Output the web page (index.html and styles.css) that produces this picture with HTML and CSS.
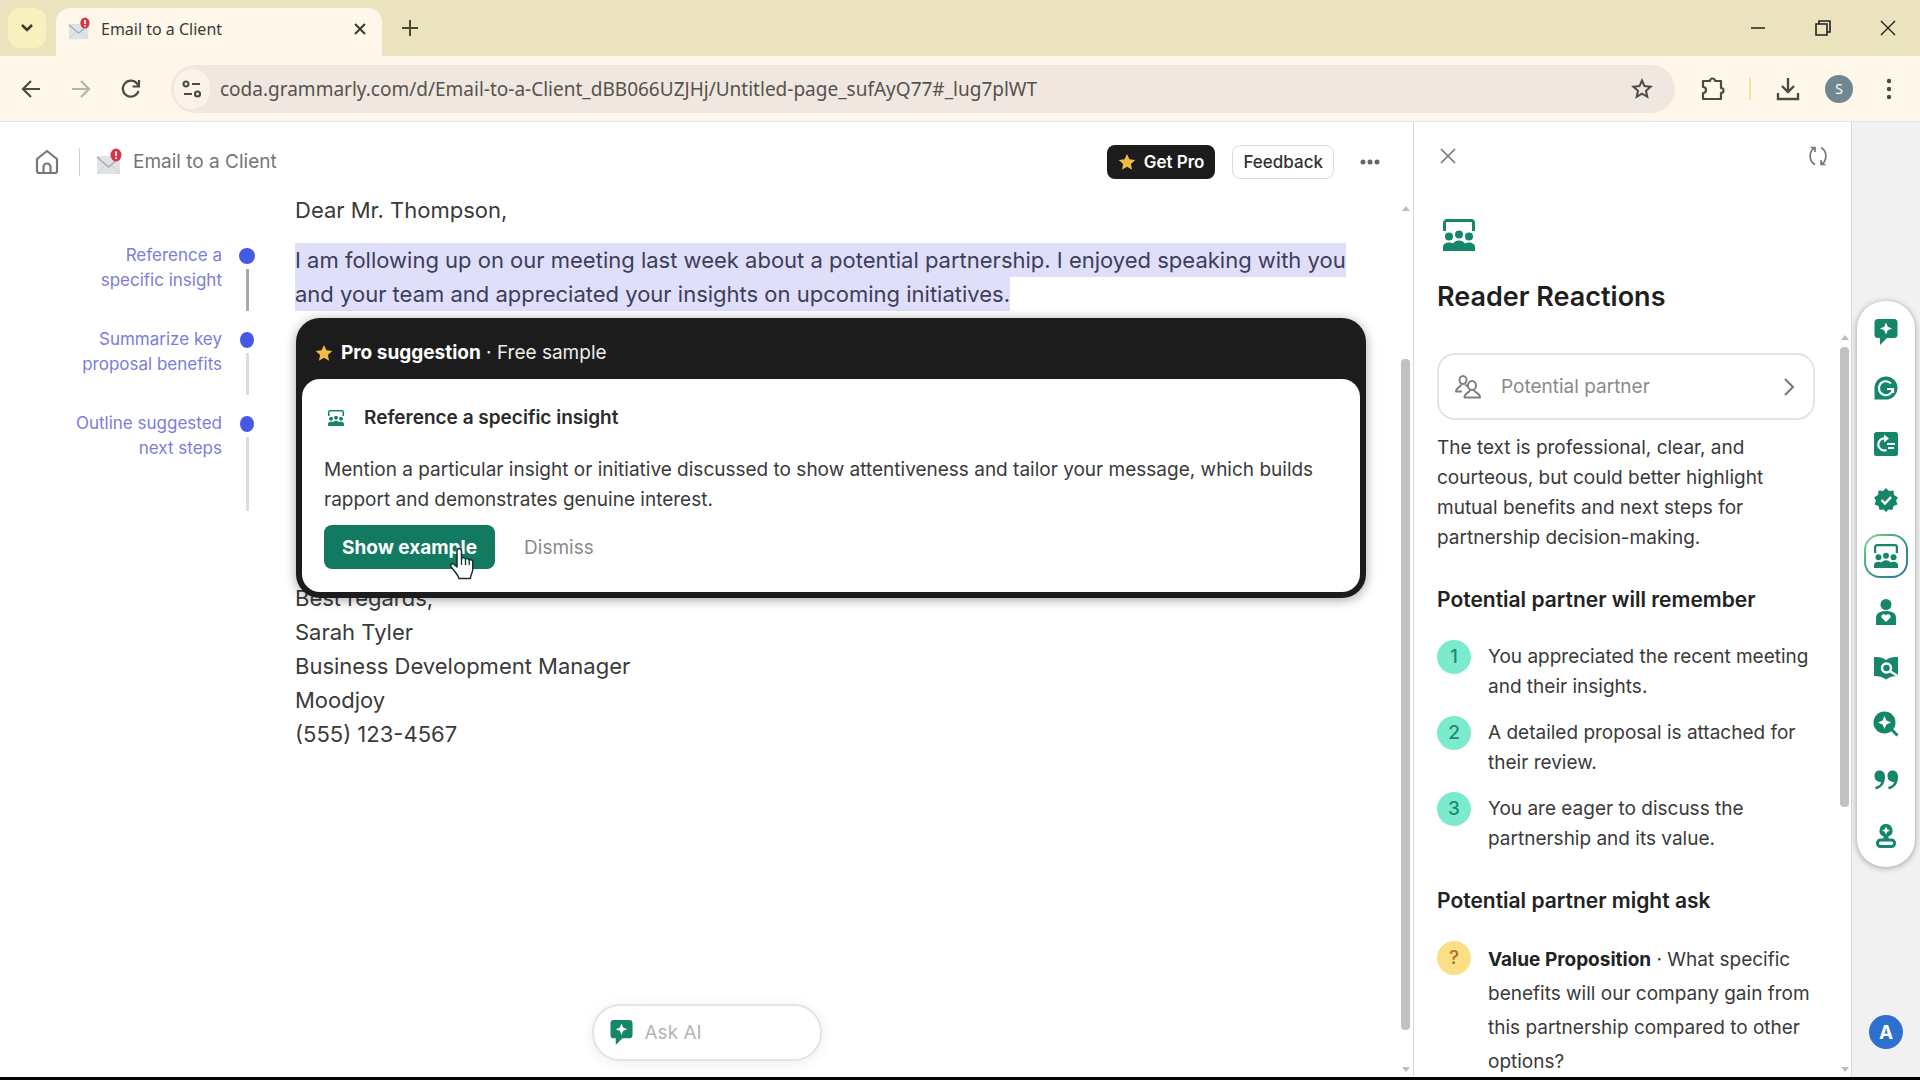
FILE: index.html
```html
<!DOCTYPE html>
<html lang="en">
<head>
    <meta charset="UTF-8">
    <meta name="viewport" content="width=device-width, initial-scale=1.0">
    <title>Email to a Client</title>
    <link rel="stylesheet" href="styles.css">
</head>
<body>
    <!-- Shared icons -->
    <svg class="sprite" aria-hidden="true">
        <symbol id="mail" viewBox="0 0 26 28">
            <rect x="1" y="8" width="23" height="18" rx="1" fill="#dfe3e5"/>
            <path d="M1 9l11.500 10L24 9" fill="none" stroke="#a3acb2" stroke-width="1.500"/>
            <path d="M1 26l8-9M24 26l-8-9" fill="none" stroke="#cdd3d6"/>
            <ellipse cx="20" cy="7" rx="5.500" ry="6.500" fill="#da3447"/>
            <path d="M20 3.500v4.500M20 9.500v1.500" stroke="#fff" stroke-width="2"/>
        </symbol>
        <symbol id="star" viewBox="0 0 20 20">
            <path d="M10 1l2.700 6 6.500.700-4.900 4.400 1.400 6.500L10 15.300l-5.700 3.300 1.400-6.500L.800 7.700 7.300 7z" fill="#f3bb46"/>
        </symbol>
        <symbol id="audience" viewBox="0 0 32 32">
            <path d="M1.500 12V4a2.500 2.500 0 0 1 2.500-2.500h24A2.500 2.500 0 0 1 30.500 4v8" fill="none" stroke="currentColor" stroke-width="3"/>
            <circle cx="6" cy="17.500" r="4" fill="currentColor"/>
            <circle cx="16" cy="15.500" r="4" fill="currentColor"/>
            <circle cx="26" cy="17.500" r="4" fill="currentColor"/>
            <path d="M0 32v-4c0-3 3-4.500 6-4.500 1.500 0 3 .300 4 1 1.500-2 3.500-3 6-3s4.500 1 6 3c1-.700 2.500-1 4-1 3 0 6 1.500 6 4.500v4z" fill="currentColor"/>
        </symbol>
        <symbol id="chat" viewBox="0 0 24 26">
            <path d="M4 0h16a3.500 3.500 0 0 1 3.500 3.500v12A3.500 3.500 0 0 1 20 19h-7l-7 7v-7H4A3.500 3.500 0 0 1 .500 15.500v-12A3.500 3.500 0 0 1 4 0z" fill="currentColor"/>
            <path d="M12 3.500l1.700 4.300L18 9.500l-4.300 1.700L12 15.500l-1.700-4.300L6 9.500l4.300-1.700z" fill="#fff"/>
        </symbol>
    </svg>

    <div class="browser">
        <header class="tab-strip">
            <button class="tab-search" aria-label="Search tabs">
                <svg width="14" height="10" viewBox="0 0 14 10"><path d="M2 2l5 5 5-5" fill="none" stroke="currentColor" stroke-width="2.500"/></svg>
            </button>
            <div class="tab">
                <svg class="tab-icon"><use href="#mail"/></svg>
                <span class="tab-title">Email to a Client</span>
                <button class="plain" aria-label="Close tab">
                    <svg width="12" height="12" viewBox="0 0 12 12"><path d="M1 1l10 10M11 1L1 11" fill="none" stroke="#3b3a35" stroke-width="2"/></svg>
                </button>
            </div>
            <button class="plain new-tab" aria-label="New tab">
                <svg width="16" height="16" viewBox="0 0 16 16"><path d="M8 0v16M0 8h16" stroke="#4a482f" stroke-width="2"/></svg>
            </button>
            <div class="window-buttons">
                <button class="plain" aria-label="Minimize"><svg width="16" height="16" viewBox="0 0 16 16"><path d="M1 8h14" stroke="#222" stroke-width="1.500"/></svg></button>
                <button class="plain" aria-label="Restore"><svg width="16" height="16" viewBox="0 0 16 16"><path d="M1 4h11v11H1zM4 4V1h11v11h-3" fill="none" stroke="#222" stroke-width="1.600"/></svg></button>
                <button class="plain" aria-label="Close window"><svg width="16" height="16" viewBox="0 0 16 16"><path d="M1 1l14 14M15 1L1 15" stroke="#222" stroke-width="1.400"/></svg></button>
            </div>
        </header>

        <nav class="toolbar">
            <button class="plain" aria-label="Back"><svg width="20" height="20" viewBox="0 0 20 20"><path d="M19 10H2M10 2l-8 8 8 8" fill="none" stroke="#4d4943" stroke-width="2.200"/></svg></button>
            <button class="plain" aria-label="Forward"><svg width="20" height="20" viewBox="0 0 20 20"><path d="M1 10h17M10 2l8 8-8 8" fill="none" stroke="#b9b3ab" stroke-width="2.200"/></svg></button>
            <button class="plain" aria-label="Reload"><svg width="20" height="20" viewBox="0 0 20 20"><path d="M17.500 12A8 8 0 1 1 16 4.500l1.500 2M18 1v6.500h-6.500" fill="none" stroke="#4d4943" stroke-width="2.200"/></svg></button>
            <div class="omnibox">
                <button class="site-info" aria-label="View site information">
                    <svg width="20" height="18" viewBox="0 0 20 18" fill="none" stroke="#4d4943" stroke-width="2.200"><circle cx="4" cy="4" r="2.500"/><path d="M10 4h8M2 14h8"/><circle cx="15.500" cy="14" r="2.500"/></svg>
                </button>
                <input class="url" type="text" aria-label="Address" value="coda.grammarly.com/d/Email-to-a-Client_dBB066UZJHj/Untitled-page_sufAyQ77#_lug7plWT">
                <button class="plain" aria-label="Bookmark"><svg width="22" height="22" viewBox="0 0 22 22"><path d="M11 2.500l2.500 5.600 6.100.600-4.600 4.100 1.300 6L11 15.700l-5.300 3.100 1.300-6-4.600-4.100 6.100-.600z" fill="none" stroke="#4d4943" stroke-width="2"/></svg></button>
            </div>
            <button class="plain" aria-label="Extensions"><svg width="26" height="26" viewBox="0 0 26 26"><path d="M3 5h7a2.500 2.500 0 0 1 5 0h6v7a2.500 2.500 0 0 1 0 5v6H3v-6a3 3 0 0 0 0-6z" fill="none" stroke="#4d4943" stroke-width="2.200" stroke-linejoin="round"/></svg></button>
            <span class="toolbar-divider"></span>
            <button class="plain" aria-label="Downloads"><svg width="24" height="24" viewBox="0 0 24 24"><path d="M12 1v13M6 9l6 6 6-6M2 16v6h20v-6" fill="none" stroke="#4d4943" stroke-width="2.400"/></svg></button>
            <button class="profile" aria-label="Profile">S</button>
            <button class="plain" aria-label="Menu"><svg width="6" height="22" viewBox="0 0 6 22" fill="#4d4943"><circle cx="3" cy="3" r="2.200"/><circle cx="3" cy="11" r="2.200"/><circle cx="3" cy="19" r="2.200"/></svg></button>
        </nav>

        <div class="workspace">
            <main class="editor">
                <header class="doc-header">
                    <button class="plain" aria-label="Home"><svg width="24" height="26" viewBox="0 0 24 26" fill="none" stroke="#777" stroke-width="2.200" stroke-linejoin="round"><path d="M2 10l10-8 10 8v12a2 2 0 0 1-2 2H4a2 2 0 0 1-2-2z"/><path d="M8.500 24v-6a3.500 3.500 0 0 1 7 0v6"/></svg></button>
                    <span class="doc-divider"></span>
                    <svg class="doc-icon"><use href="#mail"/></svg>
                    <span class="doc-title">Email to a Client</span>
                    <button class="get-pro"><svg width="18" height="18"><use href="#star"/></svg>Get Pro</button>
                    <button class="feedback">Feedback</button>
                    <button class="plain more" aria-label="More options"><svg width="20" height="6" viewBox="0 0 20 6" fill="#666"><circle cx="3" cy="3" r="2.500"/><circle cx="10" cy="3" r="2.500"/><circle cx="17" cy="3" r="2.500"/></svg></button>
                </header>

                <div class="doc-body">
                    <ul class="outline">
                        <li class="active"><a href="#">Reference a<br>specific insight</a><span class="marker"></span></li>
                        <li><a href="#">Summarize key<br>proposal benefits</a><span class="marker"></span></li>
                        <li class="long"><a href="#">Outline suggested<br>next steps</a><span class="marker"></span></li>
                    </ul>

                    <article class="letter">
                        <p>Dear Mr. Thompson,</p>
                        <p><mark>I am following up on our meeting last week about a potential partnership. I enjoyed speaking with you and your team and appreciated your insights on upcoming initiatives.</mark></p>

                        <section class="suggestion">
                            <div class="suggestion-header">
                                <svg width="18" height="18"><use href="#star"/></svg>
                                <span><strong>Pro suggestion</strong> · Free sample</span>
                            </div>
                            <div class="suggestion-card">
                                <h2><svg width="16" height="16"><use href="#audience"/></svg>Reference a specific insight</h2>
                                <p>Mention a particular insight or initiative discussed to show attentiveness and tailor your message, which builds rapport and demonstrates genuine interest.</p>
                                <div class="suggestion-actions">
                                    <button class="show-example">Show example
                                        <svg class="pointer" width="26" height="34" viewBox="0 0 26 34"><path d="M8 20V4c0-3.500 4.500-3.500 4.500 0v8c.500-2 4-1.800 4 .500.600-1.600 3.700-1.300 3.700 1 .700-1.400 3.600-1 3.600 1.500v7c0 4-2 5-2.500 9.500H10C9 27 3.500 22.500 2 19.500c-1-2.500 1.500-3.500 3.200-2z" fill="#fff" stroke="#16302a" stroke-width="1.500" stroke-linejoin="round"/><path d="M12.500 12v6M16.500 13v5M20.200 14v4" stroke="#16302a" stroke-width="1.300"/></svg>
                                    </button>
                                    <button class="dismiss">Dismiss</button>
                                </div>
                            </div>
                        </section>

                        <p class="signature">Best regards,<br>Sarah Tyler<br>Business Development Manager<br>Moodjoy<br>(555) 123-4567</p>
                    </article>

                    <div class="scrollbar doc-scroll"><span class="arrow up"></span><span class="thumb"></span><span class="arrow down"></span></div>
                </div>

                <label class="ask-ai">
                    <svg width="23" height="25"><use href="#chat"/></svg>
                    <input type="text" placeholder="Ask AI" aria-label="Ask AI">
                </label>
            </main>

            <aside class="panel">
                <div class="panel-tools">
                    <button class="plain" aria-label="Close panel"><svg width="16" height="16" viewBox="0 0 16 16"><path d="M1 1l14 14M15 1L1 15" stroke="#777" stroke-width="1.700"/></svg></button>
                    <button class="plain" aria-label="Refresh"><svg width="20" height="20" viewBox="0 0 20 20" fill="none" stroke="#777" stroke-width="1.700"><path d="M7 18.500C.500 15 .500 5 7 1.500M2.500 1.500H7V6M13 1.500c6.500 3.500 6.500 13.500 0 17M17.500 18.500H13V14"/></svg></button>
                </div>
                <div class="panel-title">
                    <svg width="32" height="32"><use href="#audience"/></svg>
                    <h1>Reader Reactions</h1>
                </div>
                <div class="panel-body">
                    <div class="panel-content">
                        <button class="reader">
                            <svg width="26" height="24" viewBox="0 0 26 24" fill="none" stroke="#808080" stroke-width="2" stroke-linejoin="round"><ellipse cx="8" cy="5" rx="3.500" ry="4"/><ellipse cx="17" cy="10.500" rx="4" ry="4.500"/><path d="M6 9.500c-.500 3-5 3-5 7h6M10.500 9.500l1.500 2M15 15c-.500 3-5.500 2.500-5.500 7.500h15.500c0-5-5.500-4.500-6-7.500"/></svg>
                            <span>Potential partner</span>
                            <svg width="12" height="20" viewBox="0 0 12 20"><path d="M2 2l8 8-8 8" fill="none" stroke="#777" stroke-width="2"/></svg>
                        </button>
                        <p class="summary">The text is professional, clear, and courteous, but could better highlight mutual benefits and next steps for partnership decision-making.</p>
                        <h2>Potential partner will remember</h2>
                        <ol class="points">
                            <li><span class="badge">1</span><p>You appreciated the recent meeting and their insights.</p></li>
                            <li><span class="badge">2</span><p>A detailed proposal is attached for their review.</p></li>
                            <li><span class="badge">3</span><p>You are eager to discuss the partnership and its value.</p></li>
                        </ol>
                        <h2>Potential partner might ask</h2>
                        <ul class="points questions">
                            <li><span class="badge">?</span><p><strong>Value Proposition</strong> · What specific benefits will our company gain from this partnership compared to other options?</p></li>
                        </ul>
                    </div>
                    <div class="scrollbar panel-scroll"><span class="arrow up"></span><span class="thumb"></span><span class="arrow down"></span></div>
                </div>
            </aside>

            <nav class="rail">
                <div class="agents">
                    <button aria-label="AI chat"><svg width="24" height="26"><use href="#chat"/></svg></button>
                    <button aria-label="Proofreader"><svg width="24" height="24" viewBox="0 0 24 24"><path d="M12 .500A11.500 11.500 0 1 1 12 23.500H.500V12A11.500 11.500 0 0 1 12 .500z" fill="currentColor"/><path d="M17 7.500A7 7 0 1 0 18.800 13H13M16 13h3v4" fill="none" stroke="#fff" stroke-width="2.200"/></svg></button>
                    <button aria-label="Paraphraser"><svg width="24" height="24" viewBox="0 0 24 24"><rect width="24" height="24" rx="2.500" fill="currentColor"/><path d="M12 6.500h-1a6 6 0 1 0 1.500 11.500M13 12h8M14 16h6" fill="none" stroke="#fff" stroke-width="2.200"/><path d="M10 2.500l5 4-5 4z" fill="#fff"/></svg></button>
                    <button aria-label="Fact checker"><svg width="24" height="24" viewBox="0 0 24 24"><path d="M12 0l3 3 4.500-.500.500 4.500 4 2.500-2 3 1.500 4-4 1.500-1 4-4-.500-2.500 2.500-2.500-2.500-4 .500-1-4-4-1.500 1.500-4-2-3L4 7l.500-4.500L9 3z" fill="currentColor"/><path d="M7.500 12l3.500 3.500 6-6.500" fill="none" stroke="#fff" stroke-width="2.400"/></svg></button>
                    <button class="selected" aria-label="Reader reactions"><svg width="24" height="24"><use href="#audience"/></svg></button>
                    <button aria-label="Humanizer"><svg width="22" height="26" viewBox="0 0 22 26" fill="currentColor"><circle cx="11" cy="5.500" r="5.500"/><path d="M1 26v-7c0-5 4-7 10-7s10 2 10 7v7z"/><path d="M11 23l-4.500-4.500c-1-3 3-4.500 4.500-2 1.500-2.500 5.500-1 4.500 2z" fill="#fff"/></svg></button>
                    <button aria-label="Expert review"><svg width="26" height="24" viewBox="0 0 26 24"><path d="M1 1c4.500 0 9 .500 12 3 3-2.500 7.500-3 12-3v19c-5 0-9 1-12 3.500C10 21 6 20 1 20z" fill="currentColor"/><path d="M17.500 15.500l8 5" stroke="#fff" stroke-width="2.400"/><circle cx="13.500" cy="12" r="4.500" fill="none" stroke="#fff" stroke-width="2.400"/></svg></button>
                    <button aria-label="Citation finder"><svg width="26" height="26" viewBox="0 0 26 26"><circle cx="11.500" cy="11.500" r="11" fill="currentColor"/><path d="M18 18l6.500 6.500" stroke="currentColor" stroke-width="3"/><path d="M11.500 5l1.900 4.600L18 11.500l-4.600 1.900-1.900 4.600-1.900-4.600L5 11.500l4.600-1.900z" fill="#fff"/></svg></button>
                    <button aria-label="Quotes"><svg width="24" height="20" viewBox="0 0 24 20" fill="currentColor"><path d="M1 17c4-1 6-3 6-5C3 12 .500 9.500.500 6 .500 2.500 2.500.500 5.500.500c3.500 0 5.500 2.500 5.500 6.500 0 6.500-3.500 11-9 12.500zM14 17c4-1 6-3 6-5-4 0-6.500-2.500-6.500-6 0-3.500 2-5.500 5-5.500 3.500 0 5.500 2.500 5.500 6.500 0 6.500-3.500 11-9 12.500z"/></svg></button>
                    <button aria-label="Authorship"><svg width="20" height="24" viewBox="0 0 20 24"><path d="M10 0a6.500 6.500 0 0 1 2.500 12.500V16h-5v-3.500A6.500 6.500 0 0 1 10 0z" fill="currentColor"/><path d="M10 2.500l1.200 2.800L14 6.500l-2.800 1.200L10 10.500 8.800 7.700 6 6.500l2.800-1.200z" fill="#fff"/><rect x="1.500" y="16" width="17" height="6.500" rx="3" fill="#fff" stroke="currentColor" stroke-width="3"/></svg></button>
                </div>
                <button class="account" aria-label="Account">A</button>
            </nav>
        </div>
    </div>
</body>
</html>
```
FILE: styles.css
```css
* {
    box-sizing: border-box;
}

body {
    margin: 0;
    font-family: Inter, "Liberation Sans", sans-serif;
    font-size: 19px;
    color: #3a3a3a;
    background: #fff;
}

h1, h2, p, ul, ol {
    margin: 0;
    padding: 0;
    list-style: none;
}

button {
    display: flex;
    align-items: center;
    justify-content: center;
    margin: 0;
    padding: 0;
    border: none;
    font-family: inherit;
    font-size: 19px;
    cursor: pointer;
}

svg {
    flex: none;
}

.plain {
    background: none;
}

.sprite {
    display: none;
}

.browser {
    display: flex;
    flex-direction: column;
    height: 100vh;
    border-bottom: 3px solid #000;
    overflow: hidden;
}

/* Tab strip */

.tab-strip {
    display: flex;
    flex: none;
    align-items: center;
    height: 56px;
    padding-left: 8px;
    background: #ebe3bd;
    font-family: "Noto Sans", sans-serif;
}

.tab-search {
    width: 38px;
    height: 40px;
    border-radius: 12px;
    background: #faf0bd;
    color: #3b3a25;
}

.tab {
    display: flex;
    align-self: flex-end;
    align-items: center;
    width: 326px;
    height: 48px;
    margin-left: 10px;
    padding: 0 16px 6px 12px;
    border-radius: 14px 14px 0 0;
    background: #fff7ea;
}

.tab-icon {
    width: 22px;
    height: 24px;
}

.tab-title {
    flex: 1;
    margin-left: 11px;
    font-size: 16px;
    color: #3b3a35;
}

.new-tab {
    margin-left: 20px;
}

.window-buttons {
    display: flex;
    gap: 49px;
    margin-left: auto;
    padding-right: 24px;
}

/* Toolbar */

.toolbar {
    display: flex;
    flex: none;
    align-items: center;
    height: 66px;
    padding: 0 28px 0 21px;
    border-bottom: 1px solid #e6e4dd;
    background: #fff7ea;
    font-family: "Noto Sans", sans-serif;
}

.toolbar .plain + .plain {
    margin-left: 30px;
}

.omnibox {
    display: flex;
    flex: 1;
    align-items: center;
    height: 48px;
    margin: 0 25px 0 30px;
    padding: 0 22px 0 3px;
    border-radius: 24px;
    background: #efe7e0;
}

.site-info {
    width: 36px;
    height: 40px;
    border-radius: 20px;
    background: #fbf3ea;
}

.url {
    flex: 1;
    padding: 0;
    margin-left: 10px;
    border: none;
    outline: none;
    background: none;
    font-family: inherit;
    font-size: 19px;
    color: #57524c;
}

.toolbar-divider {
    width: 2px;
    height: 22px;
    margin: 0 25px 0 23px;
    background: #f3e4a0;
}

.profile {
    width: 28px;
    height: 28px;
    margin: 0 33px 0 25px;
    border-radius: 14px;
    background: #6f8791;
    font-size: 14px;
    color: #fff;
}

.workspace {
    display: flex;
    flex: 1;
    min-height: 0;
}

/* Editor */

.editor {
    position: relative;
    display: flex;
    flex: 1;
    flex-direction: column;
    min-width: 0;
}

.doc-header {
    display: flex;
    flex: none;
    align-items: center;
    height: 71px;
    padding: 8px 33px 0 35px;
}

.doc-divider {
    width: 1px;
    height: 28px;
    margin: 0 16px 0 20px;
    background: #cfcfcf;
}

.doc-icon {
    width: 26px;
    height: 28px;
}

.doc-title {
    flex: 1;
    margin-left: 11px;
    color: #757575;
}

.get-pro {
    gap: 8px;
    height: 34px;
    padding: 0 11px;
    border-radius: 8px;
    background: #1c1c1c;
    font-size: 17px;
    font-weight: 600;
    color: #fff;
}

.feedback {
    height: 34px;
    margin: 0 26px 0 17px;
    padding: 0 10px;
    border: 1px solid #dcdcdc;
    border-radius: 8px;
    background: #fff;
    font-size: 17px;
    font-weight: 500;
    color: #333;
}

.doc-body {
    display: flex;
    flex: 1;
    min-height: 0;
}

.outline {
    flex: none;
    width: 295px;
    padding: 50px 40px 0 0;
    font-size: 17px;
    line-height: 25px;
    text-align: right;
}

.outline li {
    display: flex;
    justify-content: flex-end;
    gap: 17px;
    margin-bottom: 16px;
}

.outline a {
    color: #7b7dd8;
    text-decoration: none;
}

.marker {
    display: flex;
    flex-direction: column;
    align-items: center;
    gap: 5px;
    width: 16px;
    padding-top: 5px;
}

.marker::before {
    content: "";
    width: 14px;
    height: 16px;
    border-radius: 50%;
    background: #4659e4;
}

.marker::after {
    content: "";
    width: 3px;
    height: 42px;
    background: #dcdcdc;
}

.active .marker::before {
    width: 16px;
}

.active .marker::after {
    background: #a9a9a9;
}

.long .marker::after {
    height: 74px;
}

.letter {
    flex: 1;
    font-size: 22px;
    line-height: 34px;
}

.letter mark {
    padding: 4px 0;
    background: #dfdff9;
    color: #3d3d5c;
}

.letter > p + p {
    margin-top: 16px;
}

.suggestion {
    position: relative;
    margin: 7px 1px 0;
    padding: 0 6px 6px;
    border-radius: 24px;
    background: #1c1c1c;
    box-shadow: 0 2px 12px rgba(0, 0, 0, 0.35);
}

.suggestion-header {
    display: flex;
    align-items: center;
    gap: 8px;
    height: 61px;
    padding: 8px 0 0 13px;
    font-size: 19px;
    color: #ececec;
}

.suggestion-header strong {
    font-weight: 700;
    color: #fff;
}

.suggestion-card {
    padding: 24px 26px 23px 22px;
    border-radius: 18px;
    background: #fff;
}

.suggestion-card h2 {
    display: flex;
    align-items: center;
    gap: 20px;
    padding-left: 4px;
    font-size: 19px;
    font-weight: 600;
    line-height: 30px;
    color: #2b2b2b;
}

.suggestion-card svg {
    color: #15866a;
}

.suggestion-card p {
    margin-top: 22px;
    font-size: 19px;
    line-height: 30px;
}

.suggestion-actions {
    display: flex;
    gap: 29px;
    margin-top: 10px;
}

.show-example {
    position: relative;
    height: 44px;
    padding: 0 18px;
    border-radius: 8px;
    background: #117a60;
    font-weight: 700;
    color: #fff;
}

.pointer {
    position: absolute;
    right: 20px;
    bottom: -12px;
}

.dismiss {
    background: none;
    color: #8a8a8a;
}

/* The card overlaps the first line of the signature */
.letter .signature {
    margin-top: -17px;
}

.scrollbar {
    display: flex;
    flex: none;
    flex-direction: column;
    align-items: center;
}

.arrow {
    border: 4px solid transparent;
}

.up {
    border-top: none;
    border-bottom: 5px solid #bdbdbd;
}

.down {
    margin-top: auto;
    border-top: 5px solid #bdbdbd;
    border-bottom: none;
}

.thumb {
    width: 9px;
    border-radius: 4px;
    background: #c1c1c1;
}

.doc-scroll {
    width: 15px;
    margin-left: 31px;
    padding: 13px 0 5px;
}

.doc-scroll .thumb {
    height: 671px;
    margin-top: 148px;
}

.ask-ai {
    position: absolute;
    left: 50%;
    bottom: 16px;
    display: flex;
    align-items: center;
    gap: 12px;
    width: 230px;
    height: 57px;
    padding: 0 16px;
    border: 2px solid #e4e4e4;
    border-radius: 28px;
    background: #fff;
    box-shadow: 0 2px 14px rgba(0, 0, 0, 0.08);
    color: #15866a;
    transform: translateX(-50%);
}

.ask-ai input {
    width: 100%;
    padding: 0;
    border: none;
    outline: none;
    font-family: inherit;
    font-size: 19px;
}

.ask-ai input::placeholder {
    color: #b5b5b5;
}

/* Reader reactions panel */

.panel {
    display: flex;
    flex: none;
    flex-direction: column;
    width: 439px;
    border: 1px solid #d9d9d9;
    border-width: 0 1px;
}

.panel-tools {
    display: flex;
    justify-content: space-between;
    height: 68px;
    padding: 0 23px 0 26px;
}

.panel-title {
    padding: 29px 23px 0;
}

.panel-title svg {
    display: block;
    margin-left: 6px;
    color: #15866a;
}

.panel-title h1 {
    margin-top: 28px;
    font-size: 27px;
    font-weight: 600;
    line-height: 36px;
    color: #1f1f1f;
}

.panel-body {
    display: flex;
    flex: 1;
    min-height: 0;
    margin-top: 20px;
}

.panel-content {
    flex: 1;
    padding: 18px 18px 0 23px;
    overflow: hidden;
    font-size: 19px;
    line-height: 30px;
}

.reader {
    gap: 20px;
    width: 378px;
    height: 67px;
    padding: 0 18px 0 16px;
    border: 2px solid #e4e4e4;
    border-radius: 18px;
    background: #fff;
    color: #8a8a8a;
}

.reader span {
    flex: 1;
    text-align: left;
}

.summary {
    margin-top: 13px;
}

.panel-content h2 {
    margin: 34px 0 27px;
    font-size: 21px;
    font-weight: 600;
    line-height: 26px;
    color: #222;
}

.points {
    display: flex;
    flex-direction: column;
    gap: 14px;
}

.points li {
    display: flex;
    gap: 17px;
}

.points p {
    padding-top: 2px;
}

.points strong {
    font-weight: 700;
    color: #222;
}

.badge {
    display: flex;
    flex: none;
    align-items: center;
    justify-content: center;
    width: 34px;
    height: 34px;
    border-radius: 50%;
    background: #7cebcd;
    font-weight: 500;
    color: #1d8a70;
}

.questions {
    line-height: 34px;
}

.questions .badge {
    background: #fbdf85;
    color: #b5701f;
}

.panel-scroll {
    width: 13px;
    padding: 0 0 5px;
}

.panel-scroll .thumb {
    height: 460px;
    margin-top: 7px;
}

/* Agent rail */

.rail {
    display: flex;
    flex: none;
    flex-direction: column;
    align-items: center;
    width: 68px;
    padding: 179px 0 28px;
    background: #f1f1f2;
}

.agents {
    display: flex;
    flex-direction: column;
    align-items: center;
    gap: 12px;
    width: 58px;
    padding: 9px 0;
    border-radius: 28px;
    background: #fff;
    box-shadow: 0 1px 6px rgba(0, 0, 0, 0.35);
}

.agents button {
    width: 44px;
    height: 44px;
    border-radius: 16px;
    background: #fff;
    color: #15866a;
}

.agents .selected {
    border: 2px solid transparent;
    background: linear-gradient(#fff, #fff) padding-box, linear-gradient(135deg, #8fd694, #2aa07f, #3c6fa8) border-box;
}

.account {
    width: 34px;
    height: 34px;
    margin-top: auto;
    border-radius: 50%;
    background: #2f6fd0;
    font-weight: 700;
    color: #fff;
}
```
